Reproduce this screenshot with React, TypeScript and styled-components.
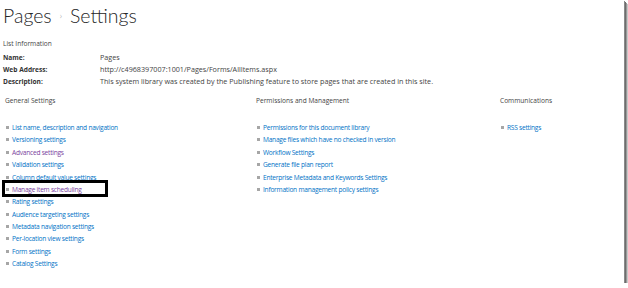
import React from "react";
import styled, { createGlobalStyle } from "styled-components";

const GlobalStyle = createGlobalStyle`
  html, body { margin: 0; padding: 0; background: #ffffff; }
  body { font-family: "Open Sans", "Noto Sans", "DejaVu Sans", sans-serif; }
`;

const Frame = styled.div`
  position: relative;
  width: 624px;
  height: 283px;
  background: #ffffff;
  box-shadow: 1px 1px 0 #8a8a8a, 2px 2px 0 #6d6d6d, 3px 3px 0 #9a9a9a, 4px 4px 0 #c8c8c8;
  overflow: hidden;
  box-sizing: border-box;
  padding: 0 0 0 3px;
`;

const TitleRow = styled.h1`
  margin: 0;
  height: 31px;
  display: flex;
  align-items: center;
  gap: 8px;
  font-family: "Lato", "Open Sans", sans-serif;
  font-weight: 300;
  font-size: 19.5px;
  color: #262626;
  line-height: 24px;
`;

const Crumb = styled.span`
  font-family: "Open Sans", sans-serif;
  font-size: 9px;
  color: #9a9a9a;
  margin-top: 1px;
`;

const Caption = styled.div`
  margin-top: 7px;
  font-size: 6.6px;
  line-height: 12px;
  color: #444444;
`;

const InfoTable = styled.div`
  display: grid;
  grid-template-columns: 97px 1fr;
  margin-top: 2px;
  font-size: 6.6px;
  line-height: 11.8px;
  color: #444444;
`;

const Label = styled.div`
  font-weight: 700;
  color: #333333;
`;

const Value = styled.div`
  font-size: 7.2px;
`;

const Columns = styled.div`
  display: grid;
  grid-template-columns: 251px 244px 1fr;
  padding-left: 2px;
  margin-top: 8px;
`;

const Section = styled.section``;

const Heading = styled.div`
  font-size: 6.6px;
  line-height: 12px;
  color: #444444;
  height: 26px;
`;

const LinkList = styled.ul`
  list-style: none;
  margin: 0;
  padding: 0 0 0 1px;
`;

const Item = styled.li`
  display: flex;
  align-items: center;
  gap: 3px;
  height: 12.36px;
  font-size: 6.6px;
  letter-spacing: -0.24px;
`;

const Bullet = styled.span`
  width: 3px;
  height: 3px;
  background: #a6a6a6;
  flex: none;
`;

const Link = styled.a<{ $visited?: boolean }>`
  color: ${(p) => (p.$visited ? "#7b3f9e" : "#0072c6")};
  text-decoration: none;
  white-space: nowrap;
`;

const Highlight = styled.div`
  position: absolute;
  left: 2px;
  top: 180px;
  width: 100px;
  height: 11px;
  border: 3px solid #000000;
  pointer-events: none;
`;

type L = { t: string; v?: boolean };

const general: L[] = [
  { t: "List name, description and navigation" },
  { t: "Versioning settings" },
  { t: "Advanced settings", v: true },
  { t: "Validation settings" },
  { t: "Column default value settings" },
  { t: "Manage item scheduling", v: true },
  { t: "Rating settings" },
  { t: "Audience targeting settings" },
  { t: "Metadata navigation settings" },
  { t: "Per-location view settings" },
  { t: "Form settings" },
  { t: "Catalog Settings" },
];

const perms: L[] = [
  { t: "Permissions for this document library" },
  { t: "Manage files which have no checked in version" },
  { t: "Workflow Settings" },
  { t: "Generate file plan report" },
  { t: "Enterprise Metadata and Keywords Settings" },
  { t: "Information management policy settings" },
];

const comms: L[] = [{ t: "RSS settings" }];

const Links = ({ items }: { items: L[] }) => (
  <LinkList>
    {items.map((i) => (
      <Item key={i.t}>
        <Bullet />
        <Link href="#" $visited={i.v}>
          {i.t}
        </Link>
      </Item>
    ))}
  </LinkList>
);

export default function App() {
  return (
    <>
      <GlobalStyle />
      <Frame>
        <TitleRow>
          <span>Pages</span>
          <Crumb>›</Crumb>
          <span>Settings</span>
        </TitleRow>
        <Caption>List Information</Caption>
        <InfoTable>
          <Label>Name:</Label>
          <Value>Pages</Value>
          <Label>Web Address:</Label>
          <Value>http://c4968397007:1001/Pages/Forms/AllItems.aspx</Value>
          <Label>Description:</Label>
          <Value>
            This system library was created by the Publishing feature to store pages that are created in this site.
          </Value>
        </InfoTable>
        <Columns>
          <Section>
            <Heading>General Settings</Heading>
            <Links items={general} />
          </Section>
          <Section>
            <Heading>Permissions and Management</Heading>
            <Links items={perms} />
          </Section>
          <Section>
            <Heading>Communications</Heading>
            <Links items={comms} />
          </Section>
        </Columns>
        <Highlight />
      </Frame>
    </>
  );
}
